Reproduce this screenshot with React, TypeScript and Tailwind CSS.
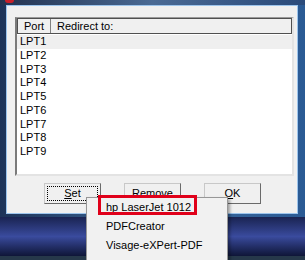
import React from 'react';

const ports = ['LPT1', 'LPT2', 'LPT3', 'LPT4', 'LPT5', 'LPT6', 'LPT7', 'LPT8', 'LPT9'];
const printers = ['hp LaserJet 1012', 'PDFCreator', 'Visage-eXPert-PDF'];

const font = { fontFamily: '"Liberation Sans", Arial, sans-serif' };

const Button: React.FC<{ label: React.ReactNode; focused?: boolean }> = ({ label, focused }) => (
  <button
    className={`w-[57px] h-[21px] bg-[#f0f0f0] border border-t-[#c8c8c8] border-l-[#c8c8c8] border-r-[#6a6a6a] border-b-[#6a6a6a] text-[11px] text-black p-[2px] ${
      focused ? 'border-[#3c3c3c]' : ''
    }`}
  >
    <span
      className={`flex h-full w-full items-center justify-center ${
        focused ? 'border border-dotted border-black' : ''
      }`}
    >
      {label}
    </span>
  </button>
);

export default function App() {
  return (
    <div className="relative w-[305px] h-[260px] overflow-hidden flex flex-col bg-[#141d42]" style={font}>
      {/* window */}
      <div className="h-[217px] flex flex-col bg-gradient-to-r from-[#1d3358] via-[#3d6a9c] to-[#2a5a94]">
        <div className="h-[5px] flex bg-gradient-to-r from-[#23324f] via-[#4a6a94] to-[#2a4a7a]">
          <div className="ml-[5px] w-[9px] h-[3px] bg-[#c8202a] rounded-b-sm" />
        </div>
        <div className="flex-1 flex pl-[6px] pr-[7px] pb-[3px]">
          <div className="flex-1 flex flex-col border border-[#9cc4ec] bg-[#f0f0f0]">
            {/* list view */}
            <div className="mt-[11px] ml-[8px] mr-[3px] h-[159px] flex flex-col bg-white border-l-2 border-t border-l-[#7a7a7a] border-t-[#9a9a9a] border-r-2 border-b-2 border-r-[#e3e3e3] border-b-[#e3e3e3]">
              <div className="h-[16px] flex border border-[#505050] bg-[#f0f0f0] text-[11px] text-black leading-[14px]">
                <div className="w-[33px] pl-[6px] border-r border-[#808080]">Port</div>
                <div className="pl-[6px]">Redirect to:</div>
              </div>
              <div className="pt-[1px]">
                {ports.map((p, i) => (
                  <div
                    key={p}
                    className={`h-[13.75px] leading-[13.75px] pl-[3px] text-[11px] text-black ${
                      i === 0 ? 'bg-[#efefef]' : ''
                    }`}
                  >
                    {p}
                  </div>
                ))}
              </div>
            </div>
            {/* buttons */}
            <div className="mt-[7px] ml-[37px] flex gap-[23px]">
              <Button
                focused
                label={
                  <>
                    <span className="underline">S</span>et
                  </>
                }
              />
              <Button label="Remove" />
              <Button
                label={
                  <>
                    <span className="underline">O</span>K
                  </>
                }
              />
            </div>
          </div>
        </div>
      </div>

      {/* desktop */}
      <div className="flex-1 flex flex-col">
        <div className="flex-1 bg-gradient-to-b from-[#1a2452] via-[#3a4b9e] to-[#0f1638]" />
        <div className="h-[4px] bg-[#26384a]" />
      </div>

      {/* popup menu */}
      <div className="absolute left-[86px] top-[197px] w-[142px] h-[64px] bg-[#f1f1f1] border border-[#979797] shadow-[2px_2px_3px_rgba(0,0,0,0.35)]">
        {printers.map((p) => (
          <div key={p} className="h-[19px] leading-[19px] pl-[19px] text-[11px] text-black whitespace-nowrap">
            {p}
          </div>
        ))}
      </div>

      {/* highlight box */}
      <div className="absolute left-[98px] top-[195px] w-[99px] h-[20px] border-[3px] border-[#e0001a]" />
    </div>
  );
}
